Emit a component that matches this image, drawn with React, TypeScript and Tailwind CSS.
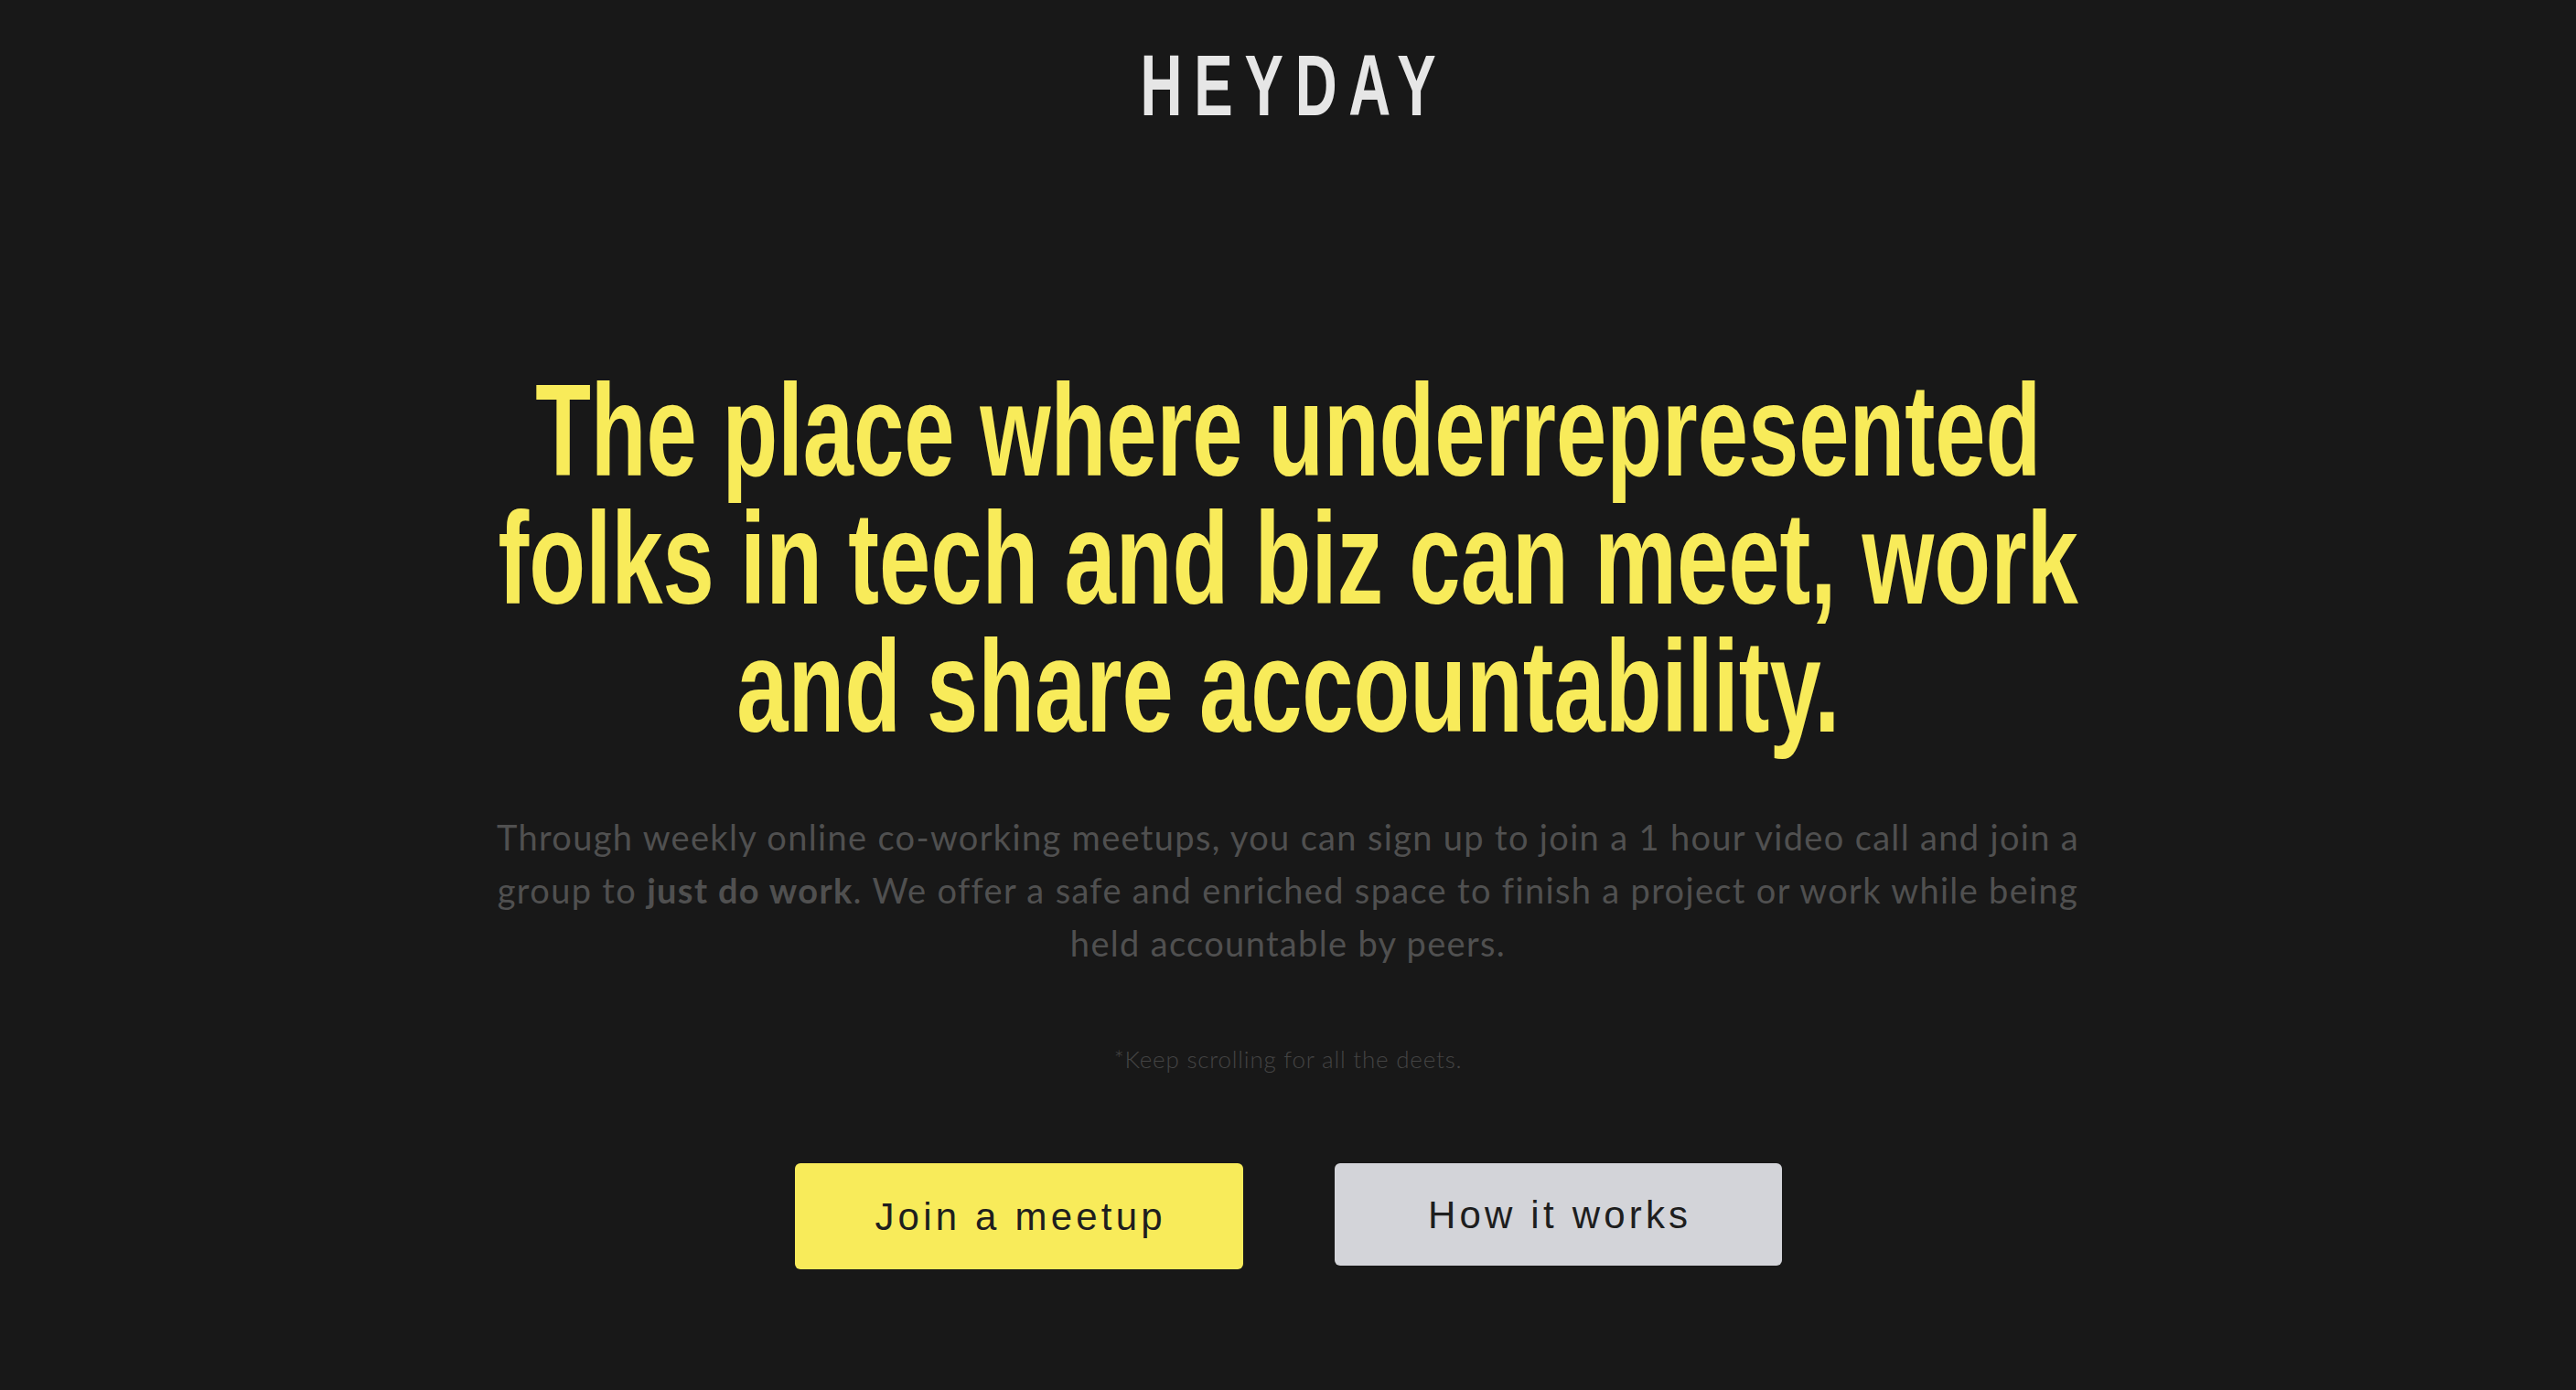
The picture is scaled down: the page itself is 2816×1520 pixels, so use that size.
export default function App() {
  const head = "font-['Liberation_Sans',Arial,sans-serif]";
  return (
    <div className="min-h-screen w-full bg-[#181818] flex flex-col items-center">
      <div className="pt-[46px]">
        <div
          className={`${head} font-bold text-[95px] leading-[95px] tracking-[0.2em] pl-[0.2em] text-[#e6e6e6] scale-x-[0.67]`}
        >
          HEYDAY
        </div>
      </div>

      <h1
        className={`${head} mt-[260px] font-bold text-[142px] leading-[140px] text-[#f8eb5a] text-center`}
      >
        <div className="whitespace-nowrap scale-x-[0.70]">The place where underrepresented</div>
        <div className="whitespace-nowrap scale-x-[0.713]">folks in tech and biz can meet, work</div>
        <div className="whitespace-nowrap scale-x-[0.712]">and share accountability.</div>
      </h1>

      <p className="mt-[65px] font-['Lato',sans-serif] text-[38px] leading-[58px] tracking-[0.035em] text-[#505050] text-center">
        <span className="block whitespace-nowrap">
          Through weekly online co-working meetups, you can sign up to join a 1 hour video call and join a
        </span>
        <span className="block whitespace-nowrap">
          group to <b className="font-bold">just do work</b>. We offer a safe and enriched space to finish a project or work while being
        </span>
        <span className="block whitespace-nowrap">held accountable by peers.</span>
      </p>

      <p className="mt-[82px] font-['Lato',sans-serif] font-light text-[26px] leading-[32px] tracking-[0.03em] text-[#444444]">
        *Keep scrolling for all the deets.
      </p>

      <div className="mt-[98px] flex items-start gap-[100px]">
        <button className="w-[490px] h-[116px] rounded-[6px] bg-[#f8eb5a] font-['Liberation_Sans',sans-serif] text-[42px] tracking-[0.1em] pl-[0.1em] text-[#1e1e1e] flex items-center justify-center">
          Join a meetup
        </button>
        <button className="w-[489px] h-[112px] rounded-[6px] bg-[#d3d4d9] font-['Liberation_Sans',sans-serif] text-[42px] tracking-[0.1em] pl-[0.1em] text-[#1e1e1e] flex items-center justify-center">
          How it works
        </button>
      </div>
    </div>
  );
}
